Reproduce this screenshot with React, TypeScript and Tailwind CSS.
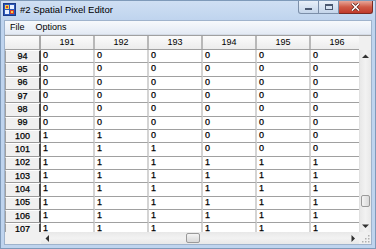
import React from "react";

const cols = [191, 192, 193, 194, 195, 196];
const rows: [number, number[]][] = [
  [94, [0, 0, 0, 0, 0, 0]],
  [95, [0, 0, 0, 0, 0, 0]],
  [96, [0, 0, 0, 0, 0, 0]],
  [97, [0, 0, 0, 0, 0, 0]],
  [98, [0, 0, 0, 0, 0, 0]],
  [99, [0, 0, 0, 0, 0, 0]],
  [100, [1, 1, 0, 0, 0, 0]],
  [101, [1, 1, 1, 0, 0, 0]],
  [102, [1, 1, 1, 1, 1, 1]],
  [103, [1, 1, 1, 1, 1, 1]],
  [104, [1, 1, 1, 1, 1, 1]],
  [105, [1, 1, 1, 1, 1, 1]],
  [106, [1, 1, 1, 1, 1, 1]],
  [107, [1, 1, 1, 1, 1, 1]],
];

function AppIcon() {
  return (
    <svg width="13" height="13" viewBox="0 0 13 13">
      <rect x="0.5" y="0.5" width="12" height="12" fill="#2d58b8" stroke="#1a3a8a" />
      <rect x="2" y="2" width="4" height="4" fill="#f4d24a" />
      <rect x="7" y="2" width="4" height="4" fill="#e8f0ff" />
      <rect x="2" y="7" width="4" height="4" fill="#e8f0ff" />
      <rect x="7" y="7" width="4" height="4" fill="#d8402c" />
      <rect x="3" y="3" width="2" height="2" fill="#d8402c" />
      <rect x="8" y="8" width="2" height="2" fill="#f4d24a" />
    </svg>
  );
}

function Tri({ dir }: { dir: "up" | "down" | "left" | "right" }) {
  const pts =
    dir === "up"
      ? "0,4 3.5,0.5 7,4"
      : dir === "down"
      ? "0,0.5 7,0.5 3.5,4"
      : dir === "left"
      ? "4,0 0.5,3.5 4,7"
      : "0.5,0 4,3.5 0.5,7";
  const w = dir === "up" || dir === "down" ? 7 : 4.5;
  const h = dir === "up" || dir === "down" ? 4.5 : 7;
  return (
    <svg width={w} height={h} viewBox={`0 0 ${w} ${h}`}>
      <polygon points={pts} fill="#303030" />
    </svg>
  );
}

export default function App() {
  return (
    <div className="w-[376px] h-[249px] flex flex-col overflow-hidden bg-[#bfd4ee] border border-[#7f9ab9] font-['Liberation_Sans',Arial,sans-serif] text-black text-[9px] leading-none">
      {/* Title bar */}
      <div className="h-[19px] flex items-start shrink-0 bg-gradient-to-b from-[#cfdff3] to-[#bfd4ee]">
        <div className="pl-[2px] pt-[2px]">
          <AppIcon />
        </div>
        <div className="pl-[4px] pt-[4px] text-[9.5px] text-black">#2 Spatial Pixel Editor</div>
        <div className="ml-auto mr-[2px] flex h-[13px]">
          <div className="w-[21px] h-full flex items-end justify-center pb-[3px] bg-gradient-to-b from-[#e9f0f9] to-[#c4d5ea] border border-t-0 border-[#7c8fa9] rounded-bl-[3px]">
            <div className="w-[7px] h-[2px] bg-[#4a5870]" />
          </div>
          <div className="w-[20px] h-full flex items-center justify-center bg-gradient-to-b from-[#e9f0f9] to-[#c4d5ea] border-y border-r border-t-0 border-[#7c8fa9]">
            <div className="w-[8px] h-[6px] border border-[#4a5870] border-t-2" />
          </div>
          <div className="w-[34px] h-full flex items-center justify-center bg-gradient-to-b from-[#e6a699] via-[#cf5a46] to-[#c0392b] border border-t-0 border-l-0 border-[#7a2a22] rounded-br-[3px]">
            <svg width="9" height="8" viewBox="0 0 9 8">
              <path d="M1 0.5 L8 7.5 M8 0.5 L1 7.5" stroke="#5a1a12" strokeWidth="3" />
              <path d="M1 0.5 L8 7.5 M8 0.5 L1 7.5" stroke="#ffffff" strokeWidth="1.6" />
            </svg>
          </div>
        </div>
      </div>

      {/* Client area */}
      <div className="flex-1 flex flex-col mx-[3px] mb-[3px] bg-[#f0f0f0] border border-[#9fb3cc] min-h-0">
        {/* Menu bar */}
        <div className="h-[14px] shrink-0 flex items-center gap-[11px] pl-[5px] bg-gradient-to-b from-[#f7f9fc] to-[#e3eaf4] border-b border-[#d4dbe6]">
          <span>File</span>
          <span>Options</span>
        </div>

        {/* Grid + vertical scrollbar */}
        <div className="flex-1 flex min-h-0 border-t border-[#a0a0a0]">
          <div className="flex-1 flex flex-col overflow-hidden min-w-0">
            {/* header row */}
            <div className="h-[14px] shrink-0 flex bg-gradient-to-b from-[#fbfbfb] to-[#ececec] border-b border-[#a0a0a0]">
              <div className="w-[36px] shrink-0 border-r-2 border-[#a8a8a8]" />
              {cols.map((c) => (
                <div
                  key={c}
                  className="w-[54px] shrink-0 flex items-center justify-center border-r-2 border-[#b8b8b8]"
                >
                  {c}
                </div>
              ))}
            </div>
            {/* data rows */}
            <div className="flex-1 flex flex-col overflow-hidden [-webkit-text-stroke:0.25px_#000]">
              {rows.map(([r, vals]) => (
                <div key={r} className="h-[13.33px] shrink-0 flex">
                  <div className="w-[36px] shrink-0 flex items-center justify-center bg-[#f0f0f0] border-l border-[#a0a0a0] border-b border-b-[#9a9a9a] border-t border-t-[#ffffff] border-r-2 border-r-[#505050] pb-[1px]">
                    {r}
                  </div>
                  {vals.map((v, i) => (
                    <div
                      key={i}
                      className="w-[54px] shrink-0 flex items-center pl-[2px] pb-[1px] bg-white border-b border-[#a0a0a0] border-r-2 border-r-[#d4d4d4]"
                    >
                      {v}
                    </div>
                  ))}
                </div>
              ))}
            </div>
          </div>
          {/* vertical scrollbar */}
          <div className="w-[12px] shrink-0 flex flex-col">
            <div className="h-[14px] shrink-0 bg-[#f0f0f0]" />
            <div className="flex-1 flex flex-col bg-gradient-to-r from-[#e8e8e8] via-[#f2f2f2] to-[#e8e8e8] border-l border-[#e0e0e0]">
              <div className="h-[12px] flex items-center justify-center">
                <Tri dir="up" />
              </div>
              <div className="flex-1" />
              <div className="h-[12px] mx-[1px] mb-[13px] rounded-[2px] border border-[#9a9a9a] bg-gradient-to-r from-[#f4f4f4] to-[#d9d9d9]" />
              <div className="h-[12px] flex items-center justify-center">
                <Tri dir="down" />
              </div>
            </div>
          </div>
        </div>

        {/* horizontal scrollbar */}
        <div className="h-[12px] shrink-0 flex">
          <div className="w-[36px] shrink-0 bg-[#f0f0f0]" />
          <div className="flex-1 flex items-stretch bg-gradient-to-b from-[#e8e8e8] via-[#f2f2f2] to-[#e8e8e8]">
            <div className="w-[12px] flex items-center justify-center">
              <Tri dir="left" />
            </div>
            <div className="w-[133px]" />
            <div className="w-[14px] my-[1px] rounded-[2px] border border-[#9a9a9a] bg-gradient-to-b from-[#f4f4f4] to-[#d9d9d9]" />
            <div className="flex-1" />
            <div className="w-[12px] flex items-center justify-center">
              <Tri dir="right" />
            </div>
          </div>
          <div className="w-[12px] shrink-0 bg-[#f0f0f0] relative">
            <svg className="absolute right-[1px] bottom-[1px]" width="8" height="8" viewBox="0 0 8 8">
              <rect x="6" y="0" width="1.5" height="1.5" fill="#b0b0b0" />
              <rect x="3" y="3" width="1.5" height="1.5" fill="#b0b0b0" />
              <rect x="6" y="3" width="1.5" height="1.5" fill="#b0b0b0" />
              <rect x="0" y="6" width="1.5" height="1.5" fill="#b0b0b0" />
              <rect x="3" y="6" width="1.5" height="1.5" fill="#b0b0b0" />
              <rect x="6" y="6" width="1.5" height="1.5" fill="#b0b0b0" />
            </svg>
          </div>
        </div>
      </div>
    </div>
  );
}
